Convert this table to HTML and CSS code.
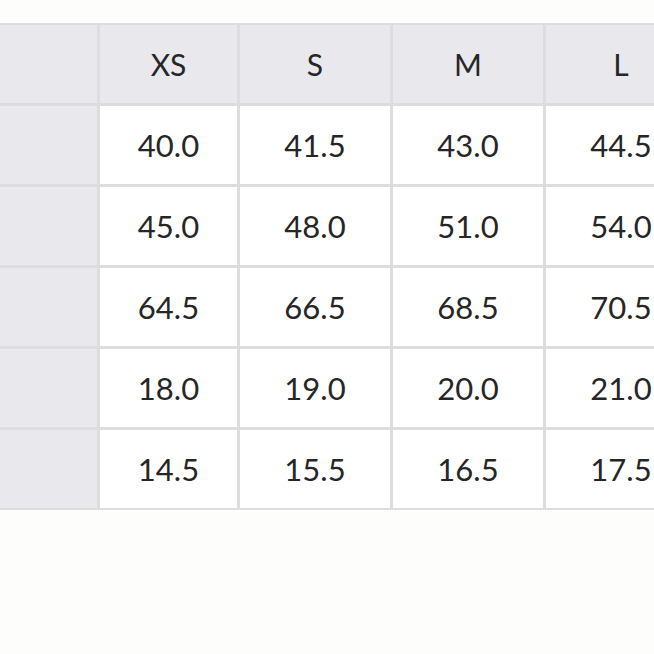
FILE: index.html
```html
<!DOCTYPE html>
<html>
<head>
<meta charset="utf-8">
<link rel="stylesheet" href="styles.css">
</head>
<body>
<div class="page">
  <div class="table">
    <div class="cell side"></div>
    <div class="cell head">XS</div>
    <div class="cell head">S</div>
    <div class="cell head">M</div>
    <div class="cell head">L</div>

    <div class="cell side"></div>
    <div class="cell">40.0</div>
    <div class="cell">41.5</div>
    <div class="cell">43.0</div>
    <div class="cell">44.5</div>

    <div class="cell side"></div>
    <div class="cell">45.0</div>
    <div class="cell">48.0</div>
    <div class="cell">51.0</div>
    <div class="cell">54.0</div>

    <div class="cell side"></div>
    <div class="cell">64.5</div>
    <div class="cell">66.5</div>
    <div class="cell">68.5</div>
    <div class="cell">70.5</div>

    <div class="cell side"></div>
    <div class="cell">18.0</div>
    <div class="cell">19.0</div>
    <div class="cell">20.0</div>
    <div class="cell">21.0</div>

    <div class="cell side"></div>
    <div class="cell">14.5</div>
    <div class="cell">15.5</div>
    <div class="cell">16.5</div>
    <div class="cell">17.5</div>
  </div>
</div>
</body>
</html>
```
FILE: styles.css
```css
html, body {
  margin: 0;
  padding: 0;
  background: #fdfdfb;
}
.page {
  width: 654px;
  height: 654px;
  overflow: hidden;
  padding-top: 23px;
  box-sizing: border-box;
}
.table {
  display: grid;
  grid-template-columns: 97px 137px 150px 150px 150px;
  grid-auto-rows: 78px;
  gap: 3px;
  padding: 2px 0;
  width: max-content;
  background: #dddde0;
}
.cell {
  background: #ffffff;
  display: flex;
  align-items: center;
  justify-content: center;
  font-family: Lato, "Noto Sans", sans-serif;
  font-weight: 400;
  font-size: 31px;
  color: #262626;
}
.head, .side {
  background: #e9e9ed;
}
.head {
  font-size: 30px;
}
```
